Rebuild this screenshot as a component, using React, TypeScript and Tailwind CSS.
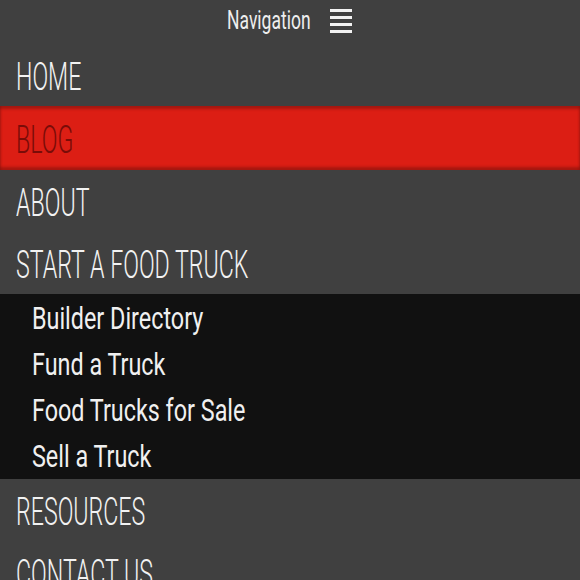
import React from "react"

const mainFont = { fontFamily: "Roboto, 'Liberation Sans', sans-serif" }

const MainItem: React.FC<{ label: string; active?: boolean }> = ({ label, active }) => {
    return (
        <div
            className={
                active
                    ? "h-[64px] flex items-center px-4 pt-1 bg-[#dc1e14] shadow-[inset_0_3px_3px_rgba(0,0,0,0.25),inset_0_-3px_3px_rgba(0,0,0,0.25)]"
                    : "h-[62px] flex items-center px-4 pt-1"
            }
        >
            <span
                className={
                    "inline-block origin-left scale-x-[0.61] text-[38px] leading-none font-light whitespace-nowrap " +
                    (active ? "text-[#7a0c08]" : "text-[#f2f2f2]")
                }
            >
                {label}
            </span>
        </div>
    )
}

const SubItem: React.FC<{ label: string }> = ({ label }) => {
    return (
        <div className="h-[46px] flex items-center pl-8">
            <span className="inline-block origin-left scale-x-[0.73] text-[32px] leading-none text-[#f0f0f0] whitespace-nowrap">
                {label}
            </span>
        </div>
    )
}

const App: React.FC = () => {
    return (
        <div className="w-[580px] h-[580px] overflow-hidden bg-[#404040]" style={mainFont}>
            <nav>
                {/* header */}
                <div className="h-[44px] flex items-center justify-center gap-4 pb-1">
                    <span className="inline-block origin-left scale-x-[0.7] text-[25px] leading-none text-[#eeeeee] mr-[-34px]">
                        Navigation
                    </span>
                    <svg width="24" height="26" viewBox="0 0 24 26">
                        <rect x="1" y="2" width="22" height="3" fill="#f2f2f2" />
                        <rect x="1" y="9" width="22" height="3" fill="#f2f2f2" />
                        <rect x="1" y="16" width="22" height="3" fill="#f2f2f2" />
                        <rect x="1" y="23" width="22" height="3" fill="#f2f2f2" />
                    </svg>
                </div>

                <MainItem label="HOME" />
                <MainItem label="BLOG" active />
                <MainItem label="ABOUT" />
                <MainItem label="START A FOOD TRUCK" />

                {/* submenu */}
                <div className="bg-[#111111] pt-px">
                    <SubItem label="Builder Directory" />
                    <SubItem label="Fund a Truck" />
                    <SubItem label="Food Trucks for Sale" />
                    <SubItem label="Sell a Truck" />
                </div>

                <MainItem label="RESOURCES" />
                <MainItem label="CONTACT US" />
            </nav>
        </div>
    )
}

export default App
